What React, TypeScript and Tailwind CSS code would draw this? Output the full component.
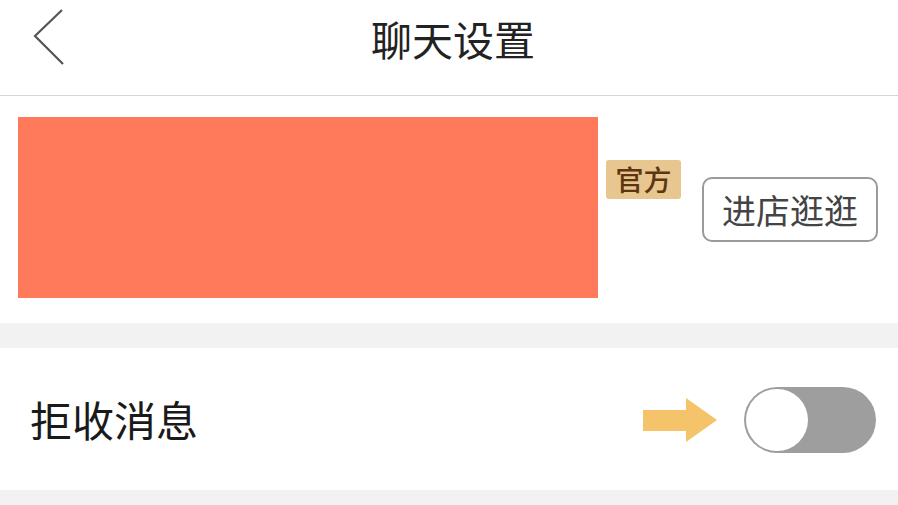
export default function App() {
  const font = { fontFamily: '"Noto Sans CJK SC", "Noto Sans", sans-serif' };
  return (
    <div style={font} className="w-[898px] h-[505px] overflow-hidden bg-[#f2f2f2] flex flex-col">
      {/* header */}
      <div className="relative h-[96px] shrink-0 bg-white border-b border-[#d6d6d6] flex items-center justify-center">
        <button className="absolute left-[30px] top-[8px]">
          <svg width="40" height="60" viewBox="0 0 40 60" fill="none">
            <path d="M32 2 L5 28 L33 56" stroke="#555" strokeWidth="2.2" />
          </svg>
        </button>
        <h1 className="text-[41px] leading-none text-[#222] -mt-[18px] ml-[8px]">聊天设置</h1>
      </div>

      {/* shop */}
      <div className="h-[227px] shrink-0 bg-white flex items-start pl-[18px] pr-[20px] pt-[21px]">
        <div className="w-[580px] h-[181px] bg-[#ff7a5a]" />
        <span className="ml-[8px] mt-[43px] h-[39px] w-[75px] rounded-[3px] bg-[#e7c690] text-[#5e3510] text-[28px] font-medium leading-[39px] text-center">
          官方
        </span>
        <button className="ml-auto mt-[60px] w-[176px] h-[65px] rounded-[10px] border-2 border-[#9a9a9a] text-[34px] leading-none text-[#444] flex items-center justify-center">
          进店逛逛
        </button>
      </div>

      <div className="h-[25px] shrink-0" />

      {/* reject messages */}
      <div className="h-[142px] shrink-0 bg-white flex items-center pl-[30px] pr-[22px]">
        <span className="text-[42px] leading-none text-[#1a1a1a]">拒收消息</span>
        <svg className="ml-auto mt-[2px]" width="74" height="45" viewBox="0 0 74 45">
          <path d="M0 12 H43 V0 L74 22 L43 44 V33 H0 Z" fill="#f4c36a" />
        </svg>
        <div className="ml-[27px] w-[132px] h-[66px] rounded-full bg-[#9e9e9e] p-[2px] flex items-center mt-[2px]">
          <div className="w-[62px] h-[62px] rounded-full bg-white" />
        </div>
      </div>
    </div>
  );
}
